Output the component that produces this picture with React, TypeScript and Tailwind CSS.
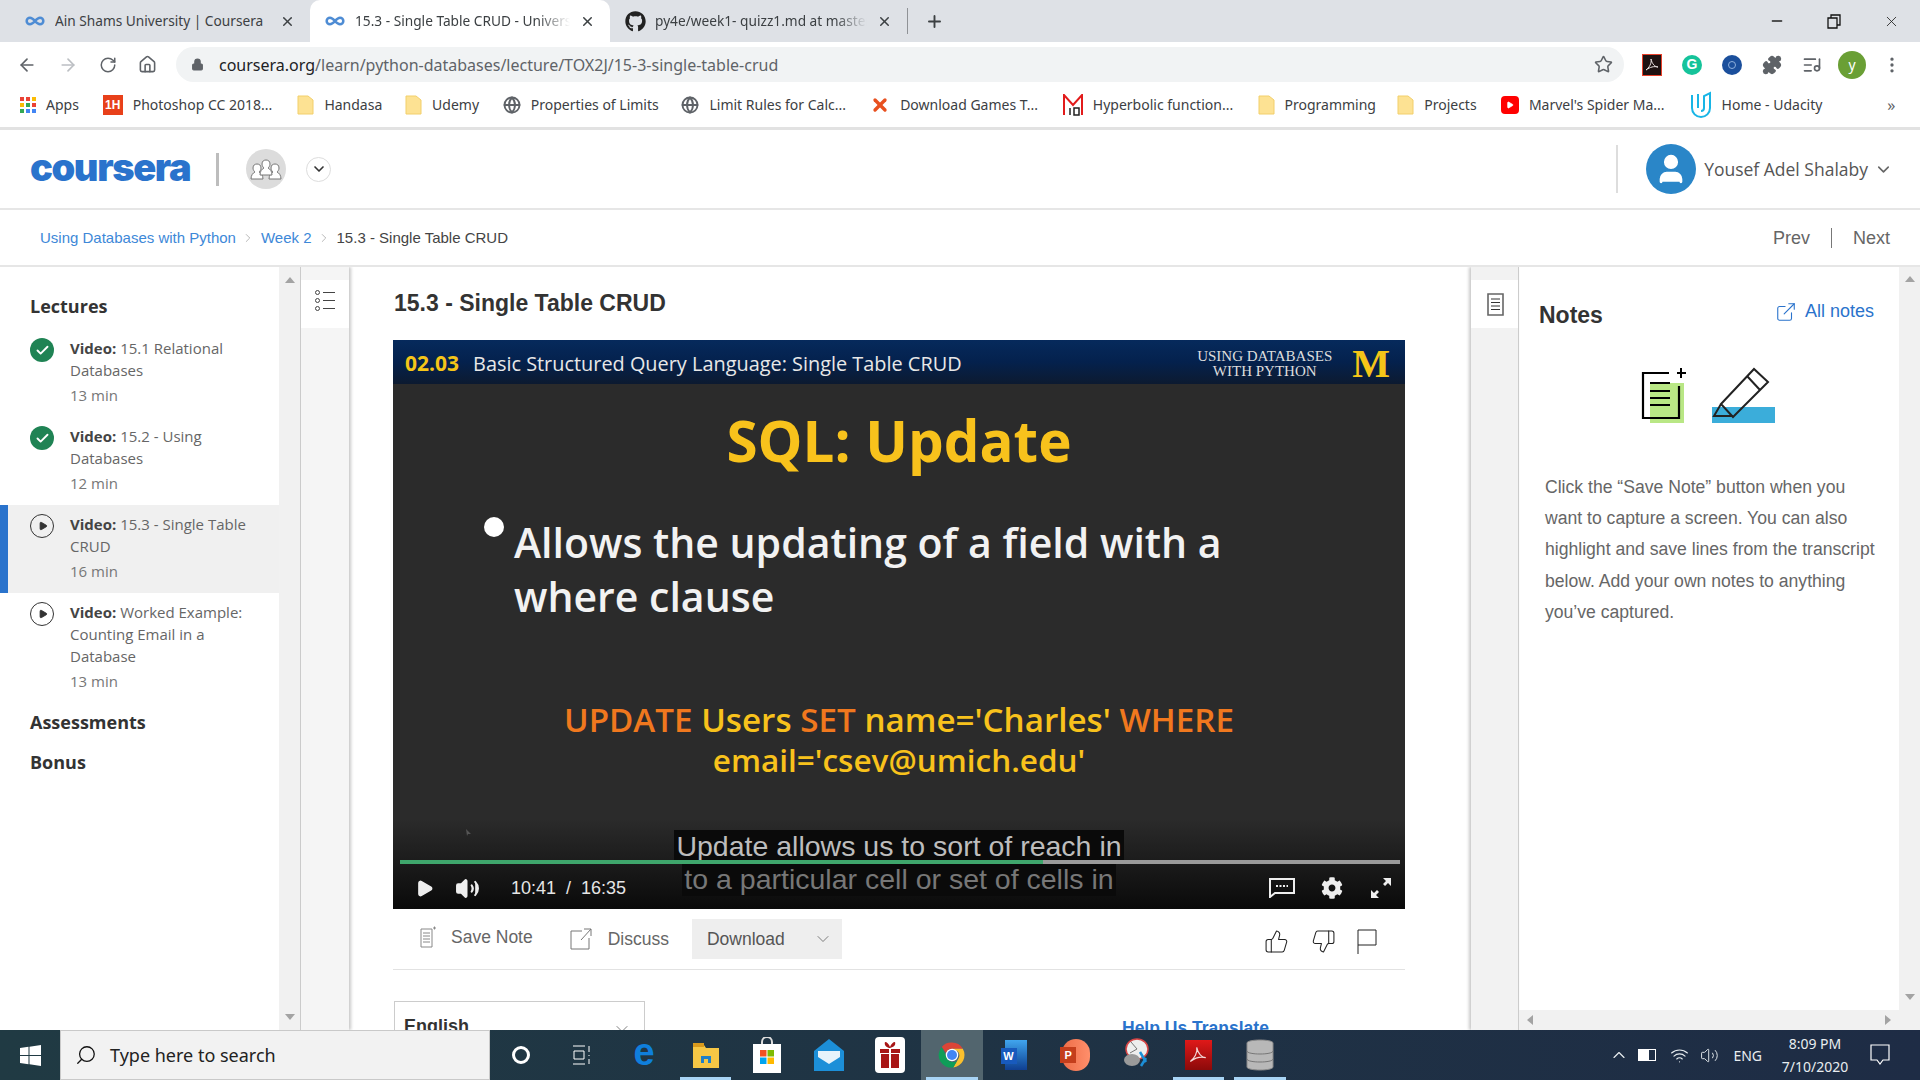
import React from "react";
import { FaGithub, FaCog } from "react-icons/fa";
import {
  ArrowLeft, ArrowRight, RotateCw, Home, Lock, Star, Puzzle, ListMusic, EllipsisVertical, Plus, X, Minus,
  ChevronDown, ChevronRight, Globe, Check, Play, Volume2, Search, ChevronUp, Wifi,
  ThumbsUp, ThumbsDown, ExternalLink, Infinity as Inf, User,
} from "lucide-react";

const sans = "font-['Liberation_Sans',Arial,sans-serif]";
const open = "font-['Open_Sans',sans-serif]";
const ui = "font-['Noto_Sans',sans-serif]";

function Tab({ title, active, icon, w, fade }: { title: string; active?: boolean; icon: React.ReactNode; w: string; fade?: boolean }) {
  return (
    <div className={`flex items-center h-[42px] px-[15px] ${w} ${active ? "bg-white rounded-t-[10px]" : ""}`}>
      <span className="w-[30px] shrink-0 flex items-center">{icon}</span>
      <span className={`flex-1 overflow-hidden whitespace-nowrap text-[13.7px] text-[#3c4043] ${ui} ${fade ? "[mask-image:linear-gradient(to_right,black_85%,transparent)]" : ""}`}>{title}</span>
      <X size={15} strokeWidth={2.4} className="text-[#3c4043] ml-[10px] shrink-0" />
    </div>
  );
}

function Folder() {
  return (
    <svg width="17" height="20" viewBox="0 0 17 20" className="shrink-0">
      <path d="M1 1h10l5 4v14H1z" fill="#fde293" stroke="#f2cf6b" />
    </svg>
  );
}

function BM({ icon, text, w }: { icon: React.ReactNode; text: string; w: string }) {
  return (
    <div className="flex items-center gap-[10px] mr-[22.7px]">
      {icon}
      <span className={`${w} whitespace-nowrap text-[14px] text-[#3c4043] ${ui}`}>{text}</span>
    </div>
  );
}

function Lecture({ lines, min, done, active }: { lines: [string, ...string[]]; min: string; done?: boolean; active?: boolean }) {
  return (
    <div className={`relative flex pl-[30px] pr-[8px] pt-[8px] pb-[11px] ${active ? "bg-[#f0f0f0]" : ""}`}>
      {active && <div className="absolute left-0 top-0 bottom-0 w-[8px] bg-[#2a73cc]" />}
      <div className="w-[40px] shrink-0 pt-[1px]">
        {done ? (
          <div className="w-[24px] h-[24px] rounded-full bg-[#1f8354] flex items-center justify-center">
            <Check size={15} strokeWidth={3} className="text-white" />
          </div>
        ) : (
          <div className="w-[24px] h-[24px] rounded-full border-[1.5px] border-[#333] flex items-center justify-center">
            <Play size={10} fill="#333" className="text-[#333] ml-[1px]" />
          </div>
        )}
      </div>
      <div className={`text-[15px] leading-[22px] text-[#666] ${open}`}>
        <div><b className="text-[#444] font-bold">Video:</b> {lines[0]}</div>
        {lines.slice(1).map((l) => <div key={l}>{l}</div>)}
        <div className="mt-[3px] text-[#777]">{min}</div>
      </div>
    </div>
  );
}

function TaskSlot({ children, active, bg }: { children?: React.ReactNode; active?: boolean; bg?: boolean }) {
  return (
    <div className={`relative w-[61.6px] h-[50px] flex items-center justify-center ${bg ? "bg-[#52656e]" : ""}`}>
      {children}
      {active && <div className="absolute bottom-0 left-[5px] right-[5px] h-[3px] bg-[#a8d4f5]" />}
    </div>
  );
}

function ChromeLogo({ size = 28 }: { size?: number }) {
  return (
    <svg width={size} height={size} viewBox="0 0 48 48">
      <path d="M24 4a20 20 0 0 1 17.3 10H24a10 10 0 0 0-9.4 6.6L7.6 11A20 20 0 0 1 24 4z" fill="#db4437" />
      <path d="M41.3 14A20 20 0 0 1 26 43.9L34.6 29A10 10 0 0 0 32 17l-8-3z" fill="#fbc02d" />
      <path d="M7.6 11A20 20 0 0 0 26 43.9L34.6 29a10 10 0 0 1-18.7-.5z" fill="#0f9d58" />
      <circle cx="24" cy="24" r="10" fill="#fff" />
      <circle cx="24" cy="24" r="8" fill="#4285f4" />
    </svg>
  );
}

function People() {
  const person = "M-6 13c0-4 2-6 4-7-1-1-2-2-2-4 0-3 2-4 4-4s4 1 4 4c0 2-1 3-2 4 2 1 4 3 4 7z";
  return (
    <svg width="32" height="24" viewBox="0 0 32 24" fill="#fff" stroke="#777" strokeWidth="1">
      <path transform="translate(7 9)" d={person} />
      <path transform="translate(25 9)" d={person} />
      <path transform="translate(16 5)" d={person} />
    </svg>
  );
}

export default function App() {
  return (
    <div className="w-[1920px] h-[1080px] overflow-hidden flex flex-col bg-white">
      {/* tab strip */}
      <div className="h-[42px] bg-[#dee1e6] flex items-end shrink-0 pl-[10px]">
        <Tab w="w-[300px]" title="Ain Shams University | Coursera" icon={<Inf size={20} strokeWidth={3} className="text-[#4e8cd4]" />} />
        <Tab w="w-[300px]" active fade title="15.3 - Single Table CRUD - University" icon={<Inf size={20} strokeWidth={3} className="text-[#4e8cd4]" />} />
        <Tab w="w-[297px]" fade title="py4e/week1- quizz1.md at master" icon={<FaGithub size={21} className="text-[#222]" />} />
        <div className="w-px h-[26px] bg-[#8f9296] mb-[8px]" />
        <div className="h-[42px] flex items-center ml-[17px]"><Plus size={19} strokeWidth={2.4} className="text-[#3c4043]" /></div>
        <div className="flex-1" />
        <div className="h-[42px] flex items-center gap-[42px] pr-[20px]">
          <Minus size={16} className="text-[#222]" />
          <svg width="14" height="15" viewBox="0 0 14 15" fill="none" stroke="#111" strokeWidth="1.3"><path d="M1 4h9v10H1zM4 4V1h9v10h-3" /></svg>
          <X size={17} strokeWidth={1.2} className="text-[#222]" />
        </div>
      </div>

      {/* address bar */}
      <div className="h-[40px] bg-white flex items-center shrink-0 pt-[5px]">
        <div className="w-[176px] pl-[17px] flex items-center gap-[21px] text-[#5f6368]">
          <ArrowLeft size={20} />
          <ArrowRight size={20} className="text-[#bcbfc3]" />
          <RotateCw size={18} />
          <Home size={19} />
        </div>
        <div className="w-[1448px] h-[35px] rounded-full bg-[#f1f3f4] flex items-center pl-[15px] pr-[11px]">
          <Lock size={13} fill="#5f6368" className="text-[#5f6368] mr-[15px]" />
          <span className={`flex-1 text-[16px] ${ui}`}><span className="text-[#202124]">coursera.org</span><span className="text-[#5f6368]">/learn/python-databases/lecture/TOX2J/15-3-single-table-crud</span></span>
          <Star size={19} className="text-[#5f6368]" />
        </div>
        <div className="flex items-center ml-[18px] gap-[20px]">
          <div className="w-[20px] h-[22px] bg-[#1e1212] border border-[#e8402a] flex items-center justify-center">
            <svg width="14" height="14" viewBox="0 0 14 14" fill="none" stroke="#e9e2e2" strokeWidth="1"><path d="M6 1c1 4-2 9-5 11 4-3 8-4 12-3-3 0-6-3-7-8z" /></svg>
          </div>
          <div className={`w-[20px] h-[20px] rounded-full bg-[#15c39a] text-white text-[14px] font-bold flex items-center justify-center ${sans}`}>G</div>
          <div className="w-[20px] h-[20px] rounded-full bg-[#1b4f9c] flex items-center justify-center"><div className="w-[8px] h-[8px] rounded-full border border-[#8fb0dc]" /></div>
          <Puzzle size={20} fill="#5f6368" className="text-[#5f6368]" />
          <ListMusic size={20} className="text-[#5f6368]" />
          <div className={`w-[28px] h-[28px] -mx-[4px] rounded-full bg-[#6a9f35] text-white text-[14px] flex items-center justify-center ${ui}`}>y</div>
          <EllipsisVertical size={20} className="text-[#5f6368]" />
        </div>
      </div>

      {/* bookmarks */}
      <div className="h-[48px] bg-white border-b-[3px] border-[#e2e2e2] flex items-center pl-[20px] shrink-0 relative">
        <BM w="w-[34px]" text="Apps" icon={
          <div className="grid grid-cols-3 gap-[2px] w-[16px] shrink-0">
            {["#ea4335","#ea4335","#fbbc05","#fbbc05","#34a853","#ea4335","#34a853","#4285f4","#4285f4"].map((c, i) => <div key={i} className="w-[4px] h-[4px]" style={{ background: c }} />)}
          </div>} />
        <BM w="w-[142px]" text="Photoshop CC 2018..." icon={<div className={`w-[20px] h-[20px] bg-[#e8401a] text-white text-[12px] font-bold flex items-center justify-center shrink-0 ${sans}`}>1H</div>} />
        <BM w="w-[58px]" text="Handasa" icon={<Folder />} />
        <BM w="w-[48px]" text="Udemy" icon={<Folder />} />
        <BM w="w-[128px]" text="Properties of Limits" icon={<Globe size={18} strokeWidth={2.5} className="text-[#5f6368] shrink-0" />} />
        <BM w="w-[138px]" text="Limit Rules for Calc..." icon={<Globe size={18} strokeWidth={2.5} className="text-[#5f6368] shrink-0" />} />
        <BM w="w-[140px]" text="Download Games T..." icon={<X size={20} strokeWidth={4} className="text-[#e8501f] shrink-0" />} />
        <BM w="w-[142px]" text="Hyperbolic function..." icon={
          <svg width="20" height="22" viewBox="0 0 20 22" className="shrink-0" fill="none"><path d="M1 21V1l9 10 9-10v20" stroke="#e21b1b" strokeWidth="2" /><path d="M7 14v7M11 14h5v7h-5z" stroke="#222" strokeWidth="1.5" /></svg>} />
        <BM w="w-[90px]" text="Programming" icon={<Folder />} />
        <BM w="w-[54px]" text="Projects" icon={<Folder />} />
        <BM w="w-[138px]" text="Marvel's Spider Ma..." icon={<div className="w-[18px] h-[18px] rounded-[4px] bg-[#f00] flex items-center justify-center shrink-0"><Play size={8} fill="#fff" className="text-white" /></div>} />
        <BM w="w-[105px]" text="Home - Udacity" icon={
          <svg width="22" height="28" viewBox="0 0 22 28" fill="none" stroke="#18b5e6" strokeWidth="2" className="shrink-0"><path d="M2 4v13c0 5 4 9 9 9s9-4 9-9V2l-6 3v12c0 2-1 3-3 3M8 3v14" /></svg>} />
        <span className={`ml-[38px] text-[16px] text-[#5f6368] ${ui}`}>»</span>
      </div>

      {/* coursera header */}
      <div className="h-[80px] border-b-2 border-[#e6e6e6] flex items-center pl-[30px] shrink-0">
        <span className="w-[159px] mb-[4px] whitespace-nowrap text-[#2a73cc] text-[38px] leading-none font-black tracking-[-1.4px] font-['Inter',sans-serif]">coursera</span>
        <div className="w-[3px] h-[33px] bg-[#bdbdbd] ml-[27px]" />
        <div className="w-[40px] h-[40px] rounded-full bg-[#dcdcdc] ml-[27px] flex items-center justify-center"><People /></div>
        <div className="w-[25px] h-[25px] rounded-full border border-[#ddd] ml-[20px] flex items-center justify-center"><ChevronDown size={16} strokeWidth={2.5} className="text-[#333]" /></div>
        <div className="flex-1" />
        <div className="w-[2px] h-[48px] bg-[#ddd]" />
        <div className="w-[50px] h-[50px] rounded-full bg-[#2a86c8] ml-[28px] flex items-center justify-center overflow-hidden"><User size={34} fill="#fff" className="text-white" /></div>
        <span className={`ml-[8px] text-[17.5px] text-[#555] ${open}`}>Yousef Adel Shalaby</span>
        <ChevronDown size={19} className="text-[#666] ml-[6px] mr-[27px]" />
      </div>

      {/* breadcrumb */}
      <div className={`h-[57px] border-b-2 border-[#e6e6e6] flex items-center pl-[40px] pr-[30px] pt-[1px] shrink-0 text-[15px] ${sans}`}>
        <span className="text-[#3d88d8]">Using Databases with Python</span>
        <ChevronRight size={14} strokeWidth={1} className="text-[#888] mx-[5.5px]" />
        <span className="text-[#3d88d8]">Week 2</span>
        <ChevronRight size={14} strokeWidth={1} className="text-[#888] mx-[5.5px]" />
        <span className="text-[#444]">15.3 - Single Table CRUD</span>
        <div className="flex-1" />
        <span className="text-[18px] text-[#666]">Prev</span>
        <span className="w-px h-[20px] bg-[#777] mx-[21px]" />
        <span className="text-[18px] text-[#666]">Next</span>
      </div>

      {/* body */}
      <div className="h-[763px] flex shrink-0 overflow-hidden">
        {/* lecture list */}
        <div className="w-[279px] shrink-0 pt-[24px]">
          <div className={`pl-[30px] text-[18px] font-bold text-[#333] leading-[30px] mb-[8px] ${open}`}>Lectures</div>
          <Lecture done lines={["15.1 Relational", "Databases"]} min="13 min" />
          <Lecture done lines={["15.2 - Using", "Databases"]} min="12 min" />
          <Lecture active lines={["15.3 - Single Table", "CRUD"]} min="16 min" />
          <Lecture lines={["Worked Example:", "Counting Email in a", "Database"]} min="13 min" />
          <div className={`pl-[30px] -mt-[1px] text-[18px] font-bold text-[#333] leading-[40px] ${open}`}>Assessments</div>
          <div className={`pl-[30px] text-[18px] font-bold text-[#333] leading-[40px] ${open}`}>Bonus</div>
        </div>
        <div className="w-[22px] shrink-0 bg-[#f1f1f1] border-r border-[#ccc] flex flex-col items-center justify-between py-[10px] text-[#a3a3a3]">
          <div className="w-0 h-0 border-x-[5px] border-x-transparent border-b-[6px] border-b-[#a3a3a3]" />
          <div className="w-0 h-0 border-x-[5px] border-x-transparent border-t-[6px] border-t-[#a3a3a3]" />
        </div>
        <div className="w-[48px] shrink-0 bg-[#f5f5f5] pt-[13px] shadow-[2px_0_3px_#c8c8c8]">
          <div className="h-[48px] bg-white flex flex-col justify-center gap-[3px] items-center pb-[7px]">
            {[0, 1, 2].map((i) => (
              <div key={i} className="flex items-center gap-[3px]"><div className="w-[5px] h-[5px] rounded-full border border-[#444]" /><div className="w-[12px] h-px bg-[#444]" /></div>
            ))}
          </div>
        </div>

        {/* main */}
        <div className="w-[1122px] shrink-0 pl-[44px] pr-[66px] pt-[18px] overflow-hidden">
          <div className={`h-[36px] leading-[36px] text-[23px] font-bold text-[#333] ml-px ${sans}`}>15.3 - Single Table CRUD</div>
          <div className="relative h-[569px] w-[1012px] mt-[19px] bg-[#2b2b2b] overflow-hidden">
            <div className="h-[44px] pt-[3px] bg-gradient-to-b from-[#062a5c] via-[#04214d] to-[#0c1a30] flex items-center pl-[12px] pr-[15px]">
              <span className={`text-[21px] font-bold text-[#f5c518] ${open}`}>02.03</span>
              <span className={`ml-[14px] text-[19.9px] text-[#e8e8e8] ${open}`}>Basic Structured Query Language: Single Table CRUD</span>
              <div className="flex-1" />
              <span className="font-['Liberation_Serif',serif] text-[15px] leading-[15px] text-[#ddd] text-center">USING DATABASES<br />WITH PYTHON</span>
              <span className="ml-[20px] font-['Liberation_Serif',serif] font-bold text-[#f5c518] text-[40px] leading-none">M</span>
            </div>
            <div className={`mt-[22px] h-[70px] leading-[70px] text-center text-[56.5px] font-bold text-[#f8c21c] ${open}`}>SQL: Update</div>
            <div className={`relative mt-[39px] ml-[121px] text-[41px] leading-[54px] font-semibold text-[#f2f2f2] ${open}`}>
              <div className="absolute left-[-30px] top-[2px] w-[20px] h-[20px] rounded-full bg-white" />
              Allows the updating of a field with a<br />where clause
            </div>
            <div className={`mt-[77px] text-center text-[33.2px] leading-[40px] font-semibold text-[#f8c21c] ${open}`}>
              <span className="text-[#f0781e]">UPDATE</span> Users <span className="text-[#f0781e]">SET</span> name='Charles' <span className="text-[#f0781e]">WHERE</span><br /><span className="text-[31.5px]">email='csev@umich.edu'</span>
            </div>
            {/* controls gradient */}
            <div className="absolute left-0 right-0 bottom-0 h-[90px] bg-gradient-to-b from-transparent to-[#0a0a0a]" />
            {/* tiny pointer inside the recording */}
            <div className="absolute left-[73px] top-[489px] w-[5px] h-[7px] bg-[#555] [clip-path:polygon(0_0,100%_70%,40%_70%,20%_100%)]" />
            {/* captions */}
            <div className={`absolute left-0 right-0 top-[490px] flex flex-col items-center text-[28.5px] leading-[33px] ${sans}`}>
              <span className="bg-[#0a0a0a] text-[#bdbdbd] px-[2px]">Update allows us to sort of reach in</span>
              <span className="bg-[#0a0a0a] text-[#777] px-[2px]">to a particular cell or set of cells in</span>
            </div>
            {/* progress */}
            <div className="absolute left-[7px] right-[5px] top-[520px] h-[4px] bg-[#9a9a9a]"><div className="h-full w-[64.3%] bg-[#3fa66c]" /></div>
            {/* controls */}
            <div className="absolute left-0 right-0 bottom-0 h-[42px] flex items-center pl-[22px] pr-[8px]">
              <Play size={19} fill="#eee" className="text-[#eee]" />
              <Volume2 size={25} fill="#eee" className="text-[#eee] ml-[21px]" />
              <span className={`ml-[31px] text-[18px] text-[#e5e5e5] whitespace-pre ${sans}`}>10:41  /  16:35</span>
              <div className="flex-1" />
              <svg width="26" height="20" viewBox="0 0 26 20" fill="none" stroke="#eee" strokeWidth="2"><path d="M1 1h24v14H6l-5 4z" /><path d="M7 8h12" strokeDasharray="2 1.5" /></svg>
              <FaCog size={22} className="text-[#eee] ml-[26px]" />
              <svg width="22" height="22" viewBox="0 0 22 22" fill="#eee" className="ml-[27px] mr-[5px]"><path d="M13 1h8v8l-3-3-3 3-2-2 3-3zM9 21H1v-8l3 3 3-3 2 2-3 3z" /></svg>
            </div>
          </div>

          {/* actions */}
          <div className={`h-[61px] w-[1012px] border-b border-[#e2e2e2] flex items-center text-[17.5px] text-[#666] ${sans}`}>
            <div className="flex items-center ml-[27px] mb-[4px]">
              <svg width="16" height="22" viewBox="0 0 16 22" fill="none" stroke="#888"><path d="M1 3h11v18H1zM3 7h7M3 10h7M3 13h7M3 16h7M13 2h3M14.5 .5v3" /></svg>
              <span className="ml-[15px]">Save Note</span>
            </div>
            <div className="flex items-center ml-[37px]">
              <svg width="22" height="22" viewBox="0 0 22 22" fill="none" stroke="#777"><path d="M12 3H1v18h18V10M11 12 21 1M14 1h7v7" /></svg>
              <span className="ml-[16px]">Discuss</span>
            </div>
            <div className="w-[150px] h-[40px] bg-[#eee] ml-[23px] flex items-center pl-[15px] pr-[9px] justify-between text-[#555]">
              Download <ChevronDown size={20} strokeWidth={1} className="text-[#666]" />
            </div>
            <div className="flex-1" />
            <ThumbsUp size={25} strokeWidth={1} className="text-[#222] mt-[4px]" />
            <ThumbsDown size={25} strokeWidth={1} className="text-[#222] ml-[22px] mt-[4px]" />
            <svg width="20" height="26" viewBox="0 0 20 26" fill="none" stroke="#222" className="ml-[21px] mr-[28px] mt-[4px]"><path d="M1 26V2h18v15H1" /></svg>
          </div>

          <div className="flex w-[1012px] mt-[31px]">
            <div className={`w-[251px] h-[60px] border border-[#ccc] ml-px pl-[9px] pr-[12px] pt-[11px] flex justify-between font-bold text-[18px] text-[#333] ${sans}`}>
              English <ChevronDown size={20} strokeWidth={1} className="text-[#666] mt-[6px]" />
            </div>
            <span className={`ml-[477px] mt-[14px] font-bold text-[17.5px] text-[#2a73cc] ${sans}`}>Help Us Translate</span>
          </div>
        </div>

        {/* notes */}
        <div className="w-[48px] shrink-0 bg-[#f2f2f2] pt-[13px] border-r border-[#ccc] shadow-[-2px_0_3px_#c8c8c8]">
          <div className="h-[48px] bg-white flex items-center justify-center pl-[2px]">
            <svg width="17" height="23" viewBox="0 0 17 23" fill="none" stroke="#666"><path d="M1 1h15v21H1z" strokeWidth="1.6" /><path d="M4 6h9M4 9.5h9M4 13h9M4 16.5h9" stroke="#333" /></svg>
          </div>
        </div>
        <div className="flex-1 flex flex-col min-w-0">
          <div className={`flex-1 pt-[23px] overflow-hidden ${sans}`}>
            <div className="flex justify-between items-start pl-[20px] pr-[25px]">
              <span className="text-[23px] font-bold text-[#333] mt-[11px] leading-[28px]">Notes</span>
              <div className="flex items-center gap-[8px] mt-[8px]">
                <ExternalLink size={22} strokeWidth={1.2} className="text-[#2a73cc]" />
                <span className="text-[18px] text-[#2a73cc]">All notes</span>
              </div>
            </div>
            <div className="flex justify-center gap-[24px] mt-[38px]">
              <svg width="46" height="56" viewBox="0 0 46 56" fill="none">
                <rect x="9" y="16" width="34" height="40" fill="#b9e785" />
                <path d="M28 6H2v45h36V19M9 16h20M9 24h20M9 31h20M9 38h20" stroke="#000" strokeWidth="2.2" />
                <path d="M36 6h9M40 1v10" stroke="#000" strokeWidth="2" />
              </svg>
              <svg width="66" height="56" viewBox="0 0 66 56" fill="none">
                <rect x="1" y="40" width="63" height="16" fill="#3badda" />
                <path d="M10 37 43 2l14 13-35 35-12-13zM36 9l13 14M10 37 3 49h19" stroke="#222" strokeWidth="2" />
              </svg>
            </div>
            <p className="mt-[49px] ml-[26px] mr-[24px] text-[17.6px] leading-[31.2px] text-[#666]">
              Click the “Save Note” button when you want to capture a screen. You can also highlight and save lines from the transcript below. Add your own notes to anything you’ve captured.
            </p>
          </div>
          <div className="h-[20px] bg-[#f1f1f1] flex items-center justify-between px-[8px] shrink-0">
            <div className="w-0 h-0 border-y-[5px] border-y-transparent border-r-[6px] border-r-[#a3a3a3]" />
            <div className="w-0 h-0 border-y-[5px] border-y-transparent border-l-[6px] border-l-[#a3a3a3]" />
          </div>
        </div>
        <div className="w-[21px] shrink-0 bg-[#f1f1f1] flex flex-col items-center justify-between pt-[9px] pb-[30px]">
          <div className="w-0 h-0 border-x-[5px] border-x-transparent border-b-[6px] border-b-[#a3a3a3]" />
          <div className="w-0 h-0 border-x-[5px] border-x-transparent border-t-[6px] border-t-[#a3a3a3]" />
        </div>
      </div>

      {/* taskbar */}
      <div className="h-[50px] shrink-0 bg-gradient-to-r from-[#203a43] to-[#1e2c45] flex items-center">
        <div className="w-[60px] flex justify-center">
          <svg width="21" height="21" viewBox="0 0 21 21" fill="#fff"><path d="M0 3l8.5-1.2V10H0zM9.5 1.7 21 0v10H9.5zM0 11h8.5v8.2L0 18zM9.5 11H21v10l-11.5-1.7z" /></svg>
        </div>
        <div className="w-[430px] h-[50px] bg-[#f2f2f2] border border-[#c9c9c9] flex items-center pl-[14px]">
          <Search size={22} strokeWidth={1.4} className="text-[#111] -scale-x-100" />
          <span className={`ml-[13px] text-[18px] text-[#222] ${ui}`}>Type here to search</span>
        </div>
        <TaskSlot><div className="w-[18px] h-[18px] rounded-full border-[3px] border-white" /></TaskSlot>
        <TaskSlot>
          <svg width="20" height="20" viewBox="0 0 20 20" fill="none" stroke="#fff"><path d="M1 1h12M1 19h12M2 6h10v8H2zM17 1v6M17 10v1M17 14v5" /></svg>
        </TaskSlot>
        <TaskSlot><span className={`text-[#0f7fdc] text-[38px] font-bold leading-none mb-[6px] ${sans}`}>e</span></TaskSlot>
        <TaskSlot active>
          <svg width="28" height="28" viewBox="0 0 28 28"><path d="M1 4h11l2 3h13v20H1z" fill="#f6c745" /><path d="M1 2h11v4H1z" fill="#d99a1c" /><path d="M9 22v-7h10v7h-3v-4h-4v4z" fill="#1f80c8" /></svg>
        </TaskSlot>
        <TaskSlot>
          <svg width="28" height="36" viewBox="0 0 28 36">
            <path d="M9 8V5a5 5 0 0 1 10 0v3" fill="none" stroke="#ddd" strokeWidth="2" />
            <rect y="7" width="28" height="29" fill="#fff" />
            <rect x="7" y="13" width="6.5" height="6.5" fill="#f25022" /><rect x="14.5" y="13" width="6.5" height="6.5" fill="#7fba00" />
            <rect x="7" y="20.5" width="6.5" height="6.5" fill="#00a4ef" /><rect x="14.5" y="20.5" width="6.5" height="6.5" fill="#ffb900" />
          </svg>
        </TaskSlot>
        <TaskSlot>
          <svg width="30" height="32" viewBox="0 0 30 32"><path d="M0 12 15 0l15 12v20H0z" fill="#1c8fd8" /><path d="M4 12h22v6L15 25 4 18z" fill="#e6f3fb" /></svg>
        </TaskSlot>
        <TaskSlot>
          <div className="w-[30px] h-[36px] bg-white rounded-[4px] flex items-center justify-center">
            <svg width="22" height="28" viewBox="0 0 22 28" fill="#a81616"><path d="M1 8h9v4H1zM12 8h9v4h-9zM2 13h8v14H2zM12 13h8v14h-8zM10 7C7 6 5 4 6 1c2 0 4 2 5 5 1-3 3-5 5-5 1 3-1 5-5 6z" /></svg>
          </div>
        </TaskSlot>
        <TaskSlot bg active><ChromeLogo size={30} /></TaskSlot>
        <TaskSlot>
          <div className="relative w-[26px] h-[30px]">
            <div className="absolute right-0 top-0 w-[22px] h-[30px] bg-gradient-to-b from-[#41a5ee] to-[#103f91]" />
            <div className={`absolute left-0 top-[8px] w-[16px] h-[16px] bg-[#185abd] text-white text-[11px] font-bold flex items-center justify-center ${sans}`}>W</div>
          </div>
        </TaskSlot>
        <TaskSlot>
          <div className="relative w-[30px] h-[32px]">
            <div className="absolute right-0 top-0 w-[28px] h-[32px] rounded-full bg-gradient-to-r from-[#ed6c47] to-[#ff8f6b]" />
            <div className={`absolute left-0 top-[8px] w-[16px] h-[16px] bg-[#c43e1c] text-white text-[11px] font-bold flex items-center justify-center ${sans}`}>P</div>
          </div>
        </TaskSlot>
        <TaskSlot>
          <svg width="30" height="34" viewBox="0 0 30 34" fill="none"><ellipse cx="15" cy="11" rx="11" ry="10" fill="#eee" stroke="#d64545" strokeWidth="1.5" /><path d="M15 11 9 4M15 11l-7 4" stroke="#777" /><ellipse cx="10" cy="22" rx="8" ry="6" fill="#9a9a9a" /><path d="M18 14l6 10M24 20l-5 8" stroke="#1c8fd8" strokeWidth="2.5" /></svg>
        </TaskSlot>
        <TaskSlot active>
          <div className="w-[27px] h-[30px] bg-gradient-to-b from-[#e01919] to-[#8c0a0a] flex items-center justify-center">
            <svg width="18" height="18" viewBox="0 0 14 14" fill="none" stroke="#f4dada" strokeWidth="0.9"><path d="M6 1c1 4-2 9-5 11 4-3 8-4 12-3-3 0-6-3-7-8z" /></svg>
          </div>
        </TaskSlot>
        <TaskSlot active>
          <svg width="28" height="32" viewBox="0 0 28 32" fill="#b8b8b8" stroke="#8a8a8a"><path d="M1 4c0-4 26-4 26 0v24c0 4-26 4-26 0z" /><path d="M1 12c0 4 26 4 26 0M1 20c0 4 26 4 26 0" fill="none" stroke="#777" /></svg>
        </TaskSlot>
        <div className="flex-1" />
        <div className={`flex items-center text-[#e8edf0] ${ui}`}>
          <ChevronUp size={20} strokeWidth={1.4} />
          <div className="w-[18px] h-[12px] border border-white ml-[9px] flex"><div className="w-[10px] h-full bg-white" /></div>
          <Wifi size={19} strokeWidth={1.4} className="ml-[14px]" />
          <Volume2 size={19} strokeWidth={1.2} className="ml-[11px]" />
          <span className="ml-[14px] text-[14px]">ENG</span>
          <div className="ml-[10px] w-[86px] text-center text-[14px] leading-[23px]">8:09 PM<br />7/10/2020</div>
          <svg width="20" height="22" viewBox="0 0 20 22" fill="none" stroke="#fff" strokeWidth="1.2" className="ml-[12px] mr-[30px]"><path d="M1 1h18v15h-6l-3 4-3-4H1z" /></svg>
        </div>
      </div>
    </div>
  );
}
